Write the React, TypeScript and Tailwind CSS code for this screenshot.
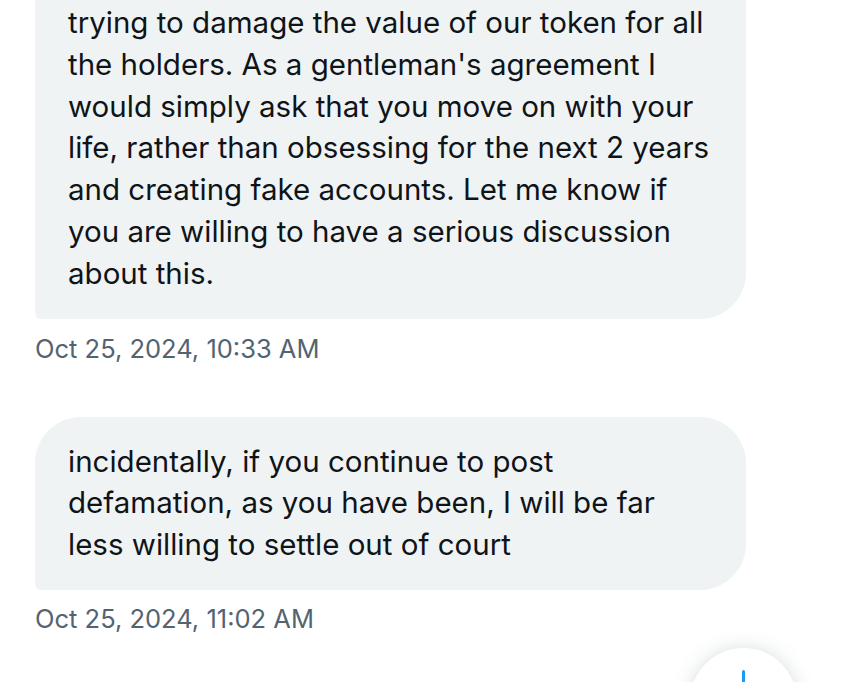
import React from "react";

const font = { fontFamily: "Inter, Roboto, Arial, sans-serif" };

function Lines({ lines }: { lines: string[] }) {
  return (
    <>
      {lines.map((l, i) => (
        <div key={i} className="whitespace-nowrap">
          {l}
        </div>
      ))}
    </>
  );
}

export default function App() {
  return (
    <div
      className="relative h-[682px] w-[864px] overflow-hidden bg-white"
      style={font}
    >
      <div className="flex flex-col pl-[35px]">
        <div className="w-[711px] rounded-br-[46px] rounded-bl-[6px] bg-[#eff3f4] pl-[33px] pt-[2px] pb-[24px] text-[29.5px] leading-[41.8px] text-[#0f1419]">
          <Lines
            lines={[
              "trying to damage the value of our token for all",
              "the holders. As a gentleman's agreement I",
              "would simply ask that you move on with your",
              "life, rather than obsessing for the next 2 years",
              "and creating fake accounts. Let me know if",
              "you are willing to have a serious discussion",
              "about this.",
            ]}
          />
        </div>
        <div className="mt-[14px] text-[25.5px] leading-[32px] text-[#536471]">
          Oct 25, 2024, 10:33 AM
        </div>

        <div className="mt-[52px] w-[711px] rounded-tl-[46px] rounded-tr-[46px] rounded-br-[46px] rounded-bl-[6px] bg-[#eff3f4] pl-[33px] pt-[24px] pb-[24px] text-[29.5px] leading-[41.8px] text-[#0f1419]">
          <Lines
            lines={[
              "incidentally, if you continue to post",
              "defamation, as you have been, I will be far",
              "less willing to settle out of court",
            ]}
          />
        </div>
        <div className="mt-[13px] text-[25.5px] leading-[32px] text-[#536471]">
          Oct 25, 2024, 11:02 AM
        </div>
      </div>

      <div className="absolute left-[690px] top-[648px] flex h-[107px] w-[107px] justify-center rounded-full bg-white pt-[22px] shadow-[0_0_18px_rgba(101,119,134,0.25)]">
        <div className="h-[40px] w-[3px] rounded-full bg-[#1d9bf0]" />
      </div>
    </div>
  );
}
